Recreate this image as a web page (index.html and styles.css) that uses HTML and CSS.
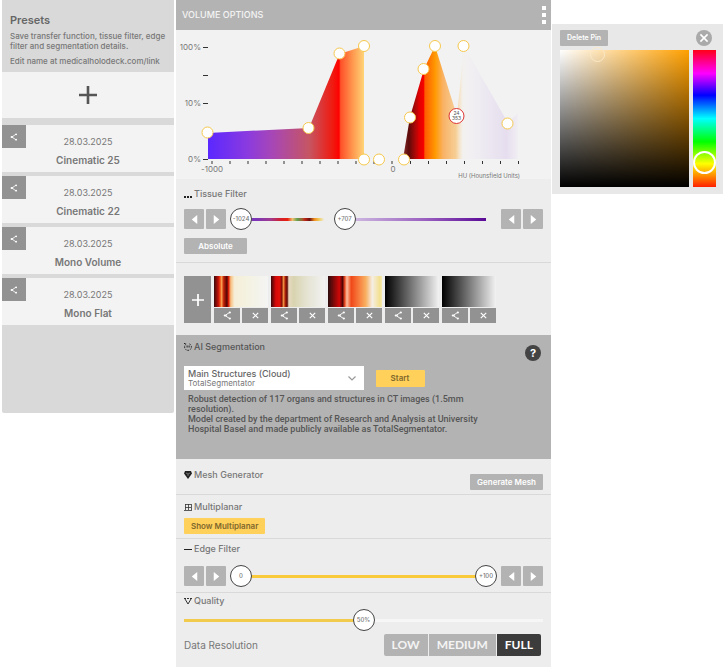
FILE: index.html
```html
<!DOCTYPE html>
<html lang="en">
<head>
<meta charset="utf-8">
<meta name="viewport" content="width=device-width, initial-scale=1">
<title>Volume Options</title>
<link rel="stylesheet" href="styles.css">
</head>
<body>
<svg class="defs" aria-hidden="true">
  <symbol id="share" viewBox="0 0 10 10"><path d="M7.500 1.500 2.200 5l5.300 3.500M2.200 5h2" fill="none" stroke="currentColor" stroke-width="1"/><circle cx="7.600" cy="1.700" r="1.200"/><circle cx="2" cy="5" r="1.200"/><circle cx="7.600" cy="8.300" r="1.200"/></symbol>
  <symbol id="cross" viewBox="0 0 10 10"><path d="m2 2 6 6M8 2 2 8" stroke="currentColor" stroke-width="1.300"/></symbol>
  <symbol id="prev" viewBox="0 0 10 10"><path d="M7.500 1v8L2.500 5z"/></symbol>
  <symbol id="next" viewBox="0 0 10 10"><path d="M2.500 1v8l5-4z"/></symbol>
  <symbol id="plus" viewBox="0 0 18 18"><path d="M9 0v18M0 9h18" stroke="currentColor" stroke-width="2.600"/></symbol>
</svg>
<div class="workspace">
  <aside class="presets">
    <header class="presets-head">
      <h2>Presets</h2>
      <p>Save transfer function, tissue filter, edge<br>filter and segmentation details.</p>
      <p>Edit name at medicalholodeck.com/link</p>
    </header>
    <button class="add-preset" aria-label="Add preset"><svg><use href="#plus"/></svg></button>
    <ul class="preset-list">
      <li class="preset"><button class="share" aria-label="Share"><svg><use href="#share"/></svg></button><time>28.03.2025</time><strong>Cinematic 25</strong></li>
      <li class="preset"><button class="share" aria-label="Share"><svg><use href="#share"/></svg></button><time>28.03.2025</time><strong>Cinematic 22</strong></li>
      <li class="preset"><button class="share" aria-label="Share"><svg><use href="#share"/></svg></button><time>28.03.2025</time><strong>Mono Volume</strong></li>
      <li class="preset"><button class="share" aria-label="Share"><svg><use href="#share"/></svg></button><time>28.03.2025</time><strong>Mono Flat</strong></li>
    </ul>
  </aside>

  <main class="options">
    <header class="bar">
      <h1>VOLUME OPTIONS</h1>
      <button class="menu" aria-label="Menu"><i></i><i></i><i></i></button>
    </header>

    <svg class="chart" viewBox="0 0 375 149" role="img" aria-label="Transfer function">
      <defs>
        <linearGradient id="low" gradientUnits="userSpaceOnUse" x1="32" y1="0" x2="188" y2="0">
          <stop offset="0" stop-color="#5a28ff"/><stop offset=".25" stop-color="#8a3ae0"/><stop offset=".42" stop-color="#a847b4"/><stop offset=".65" stop-color="#c65562"/><stop offset=".8" stop-color="#f01a10"/><stop offset=".84" stop-color="#ff0000"/><stop offset=".85" stop-color="#ff5028"/><stop offset=".93" stop-color="#ff9a50"/><stop offset="1" stop-color="#ffd478"/>
        </linearGradient>
        <linearGradient id="high" gradientUnits="userSpaceOnUse" x1="227" y1="0" x2="342" y2="0">
          <stop offset="0" stop-color="#8a3030"/><stop offset=".05" stop-color="#5c0a0a"/><stop offset=".11" stop-color="#b00808"/><stop offset=".14" stop-color="#e00000"/><stop offset=".18" stop-color="#f80000"/><stop offset=".19" stop-color="#ff5a00"/><stop offset=".28" stop-color="#ff9a00"/><stop offset=".35" stop-color="#f9b266"/><stop offset=".46" stop-color="#f6cf96"/><stop offset=".49" stop-color="#f5e4c8"/><stop offset=".52" stop-color="#f3f1ef"/><stop offset=".62" stop-color="#f0eef2"/><stop offset=".9" stop-color="#e6deef"/><stop offset="1" stop-color="#f1eef3"/>
        </linearGradient>
      </defs>
      <path fill="url(#low)" d="M32 129v-26l101-5 30.500-74 24.500-8v113z"/>
      <path fill="url(#high)" d="m227 129 7-42 14-48 11-23 22 70 7-70 44 77 10-10v46z"/>
      <path class="ticks" d="M27 17.500h5M27 45.500h5M27 73.500h5M27 129.500h5"/>
      <path class="ticks" d="M36 131v3m18-3v3m18-3v3m18-3v3m18-3v3m18-3v3m18-3v3m18-3v3m18-3v3m18-3v3m18-3v3m18.500-3v3m18-3v3m18-3v3m18-3v3m18-3v3m18-3v3m18-3v3"/>
      <g class="axis">
        <g text-anchor="end"><text x="25" y="20">100%</text><text x="25" y="76">10%</text><text x="25" y="132">0%</text></g>
        <g text-anchor="middle"><text x="36" y="142">-1000</text><text x="217" y="142">0</text></g>
        <text class="unit" x="344" y="148" text-anchor="end">HU (Hounsfield Units)</text>
      </g>
      <g class="pins">
        <circle cx="31.500" cy="102.500" r="5.500"/><circle cx="132.500" cy="98" r="5.500"/><circle cx="163.500" cy="23.500" r="5.500"/><circle cx="188" cy="16" r="5.500"/><circle cx="188" cy="129.500" r="5.500"/><circle cx="203" cy="129.500" r="5.500"/><circle cx="228" cy="129.500" r="5.500"/><circle cx="234" cy="87.500" r="5.500"/><circle cx="247.500" cy="39" r="5.500"/><circle cx="259" cy="16" r="5.500"/><circle cx="287.500" cy="16" r="5.500"/><circle cx="331.500" cy="93.500" r="5.500"/>
        <circle class="active" cx="280.500" cy="86" r="7.500"/>
      </g>
      <g class="pin-text" text-anchor="middle"><text x="280.500" y="85">24</text><text x="280.500" y="90">353</text></g>
    </svg>

    <section class="tissue">
      <h2><svg viewBox="0 0 8 8"><path d="M0 6h2v2H0zM3 6h2v2H3zM6 6h2v2H6z"/></svg>Tissue Filter</h2>
      <div class="slider-row">
        <div class="steps"><button aria-label="Lower minimum"><svg><use href="#prev"/></svg></button><button aria-label="Raise minimum"><svg><use href="#next"/></svg></button></div>
        <div class="slider tissue-range">
          <input type="range" min="-1024" max="3069" value="-1024" aria-label="Tissue minimum">
          <input type="range" min="-1024" max="3069" value="707" aria-label="Tissue maximum">
          <output class="at-start">-1024</output><output class="at-tissue">+707</output>
        </div>
        <div class="steps"><button aria-label="Lower maximum"><svg><use href="#prev"/></svg></button><button aria-label="Raise maximum"><svg><use href="#next"/></svg></button></div>
      </div>
      <button class="button absolute-mode">Absolute</button>
    </section>

    <section class="swatches">
      <button class="add-swatch" aria-label="Add color map"><svg><use href="#plus"/></svg></button>
      <div class="swatch"><button class="ramp ramp-a" aria-label="Color map 1"></button><button aria-label="Share"><svg><use href="#share"/></svg></button><button aria-label="Delete"><svg><use href="#cross"/></svg></button></div>
      <div class="swatch"><button class="ramp ramp-b" aria-label="Color map 2"></button><button aria-label="Share"><svg><use href="#share"/></svg></button><button aria-label="Delete"><svg><use href="#cross"/></svg></button></div>
      <div class="swatch"><button class="ramp ramp-c" aria-label="Color map 3"></button><button aria-label="Share"><svg><use href="#share"/></svg></button><button aria-label="Delete"><svg><use href="#cross"/></svg></button></div>
      <div class="swatch"><button class="ramp ramp-d" aria-label="Color map 4"></button><button aria-label="Share"><svg><use href="#share"/></svg></button><button aria-label="Delete"><svg><use href="#cross"/></svg></button></div>
      <div class="swatch"><button class="ramp ramp-d" aria-label="Color map 5"></button><button aria-label="Share"><svg><use href="#share"/></svg></button><button aria-label="Delete"><svg><use href="#cross"/></svg></button></div>
    </section>

    <section class="ai">
      <div class="ai-head">
        <h2><svg viewBox="0 0 8 8"><path d="M5.500.900a3.400 3.400 0 1 1-3 0" fill="none" stroke="#222" stroke-dasharray="1.600 1"/><path d="M2.600 2.500h1v2h-1zM4.600 2.500h1v2h-1zM0 0h1.500v1H0z"/></svg>AI Segmentation</h2>
        <button class="help" aria-label="Help">?</button>
      </div>
      <div class="model-row">
        <div class="model">
          <select aria-label="Model"><option>Main Structures (Cloud)</option></select>
          <span>TotalSegmentator</span>
          <svg viewBox="0 0 8 5"><path d="m.5.500 3.500 3.500L7.500.500" fill="none" stroke="#999" stroke-width="1.200"/></svg>
        </div>
        <button class="button yellow start">Start</button>
      </div>
      <p>Robust detection of 117 organs and structures in CT images (1.5mm<br>resolution).<br>Model created by the department of Research and Analysis at University<br>Hospital Basel and made publicly available as TotalSegmentator.</p>
    </section>

    <section class="mesh">
      <h2><svg viewBox="0 0 8 8"><path d="M1 0h6l1 2.500L4 8 0 2.500z"/><path d="m2 2 2 1 2-1M4 3v2" fill="none" stroke="#aaa" stroke-width=".6"/></svg>Mesh Generator</h2>
      <button class="button">Generate Mesh</button>
    </section>

    <section class="multiplanar">
      <h2><svg viewBox="0 0 8 8"><path d="M1 1.500h6M1 4.500h6M0 7.500h8M1.500 1v6M4.500 1v6M7.500 1v6" fill="none" stroke="#333" stroke-width=".8"/></svg>Multiplanar</h2>
      <button class="button yellow">Show Multiplanar</button>
    </section>

    <section class="edge">
      <h2><svg viewBox="0 0 8 8"><path d="M0 4h8v1H0z"/></svg>Edge Filter</h2>
      <div class="slider-row">
        <div class="steps"><button aria-label="Lower minimum"><svg><use href="#prev"/></svg></button><button aria-label="Raise minimum"><svg><use href="#next"/></svg></button></div>
        <div class="slider edge-range">
          <input type="range" value="0" aria-label="Edge minimum">
          <input type="range" value="100" aria-label="Edge maximum">
          <output class="at-start">0</output><output class="at-end">+100</output>
        </div>
        <div class="steps"><button aria-label="Lower maximum"><svg><use href="#prev"/></svg></button><button aria-label="Raise maximum"><svg><use href="#next"/></svg></button></div>
      </div>
    </section>

    <section class="quality">
      <h2><svg viewBox="0 0 8 8"><path d="M0 1.500h2M3 1.500h2M6 1.500h2M1 2l3 5 3-5" fill="none" stroke="#333"/></svg>Quality</h2>
      <div class="slider quality-range">
        <input type="range" value="50" aria-label="Quality">
        <output class="at-middle">50%</output>
      </div>
      <fieldset class="resolution">
        <legend>Data Resolution</legend>
        <div class="segments">
          <label><input type="radio" name="resolution">LOW</label>
          <label><input type="radio" name="resolution">MEDIUM</label>
          <label><input type="radio" name="resolution" checked>FULL</label>
        </div>
      </fieldset>
    </section>
  </main>

  <aside class="picker">
    <div class="picker-head">
      <button class="button">Delete Pin</button>
      <button class="close" aria-label="Close"><svg><use href="#cross"/></svg></button>
    </div>
    <div class="picker-body">
      <div class="shade"><i></i></div>
      <input class="hue" type="range" value="89" aria-label="Hue">
    </div>
  </aside>
</div>
</body>
</html>
```
FILE: styles.css
```css
* { box-sizing: border-box; }

body {
  margin: 0;
  background: #fff;
  color: #777;
  font: 8px/10px Inter, "Liberation Sans", sans-serif;
}

h1, h2, p, ul, fieldset { margin: 0; padding: 0; border: 0; }

button {
  padding: 0;
  border: 0;
  background: #b3b3b3;
  color: #fff;
  font: inherit;
  display: grid;
  place-items: center;
}

svg { fill: currentColor; display: block; }
.defs { position: absolute; width: 0; height: 0; }

.workspace {
  display: grid;
  grid-template-columns: minmax(0, 176fr) minmax(0, 375fr) minmax(0, 172fr);
  align-items: start;
}

/* Presets */
.presets {
  margin: 0 2px;
  padding-bottom: 88px;
  background: #d9d9d9;
  border-radius: 0 0 2px 2px;
}
.presets-head { height: 72px; padding: 14px 0 0 8px; white-space: nowrap; }
.presets-head h2 { margin-bottom: 4px; font-size: 11px; line-height: 13px; font-weight: 600; color: #666; }
.presets-head p { margin-bottom: 5px; font-weight: 500; }
.add-preset { width: 100%; height: 46px; background: #f3f3f3; color: #555; }
.add-preset svg { width: 18px; height: 18px; }
.preset-list { list-style: none; margin-top: 7px; display: grid; gap: 4px; }
.preset {
  position: relative;
  height: 47px;
  padding-top: 11px;
  background: #f3f3f3;
  text-align: center;
}
.preset time { display: block; font-size: 9px; line-height: 12px; }
.preset strong { display: block; margin-top: 5px; font-size: 10px; line-height: 14px; font-weight: 600; }
.share { position: absolute; left: 0; top: 0; width: 24px; height: 23px; background: #929292; }
.share svg { width: 8px; height: 8px; }

/* Main panel */
.options { background: #ededed; }
.bar {
  height: 30px;
  padding: 0 5px 0 6px;
  background: #b3b3b3;
  color: #f4f4f4;
  display: flex;
  align-items: center;
  justify-content: space-between;
}
.bar h1 { font-size: 9px; line-height: 12px; font-weight: 500; }
.menu { gap: 3px; }
.menu i { width: 4px; height: 4px; background: #fff; }

.chart { width: 100%; height: auto; background: #f2f2f2; }
.ticks { fill: none; stroke: #333; }
.axis { fill: #777; font-size: 8px; }
.axis .unit { font-size: 6px; }
.pins circle { fill: #fff; stroke: #f5c84c; }
.pins .active { stroke: #d33; }
.pin-text { fill: #555; font-size: 5px; }

section { padding: 0 8px; border-bottom: 1px solid #d9d9d9; }
section h2 {
  display: flex;
  align-items: center;
  gap: 2px;
  font-size: 9px;
  line-height: 12px;
  font-weight: 500;
}
section h2 svg { width: 8px; height: 8px; color: #222; }

.button { height: 16px; padding: 0 7px; border-radius: 1px; font-weight: 600; white-space: nowrap; }
.yellow { background: #ffd05a; color: #80682d; }

.slider-row { display: flex; align-items: center; gap: 4px; }
.steps { display: flex; gap: 2px; }
.steps button { width: 20px; height: 20px; border-radius: 1px; }
.steps svg { width: 11px; height: 11px; }

.slider { position: relative; flex: 1; height: 22px; display: flex; align-items: center; }
.slider::before { content: ""; flex: 1; height: 3px; margin: 0 11px; }
.slider input {
  position: absolute;
  inset: 0;
  width: 100%;
  height: 22px;
  margin: 0;
  appearance: none;
  background: none;
  pointer-events: none;
}
.slider input::-webkit-slider-thumb {
  appearance: none;
  width: 22px;
  height: 22px;
  border: 1px solid #444;
  border-radius: 50%;
  background: #fff;
  pointer-events: auto;
}
.slider output {
  position: absolute;
  width: 22px;
  text-align: center;
  font-size: 6px;
  font-weight: 500;
  pointer-events: none;
}
.at-start { left: 0; }
.at-end { right: 0; }
.at-middle { left: calc(50% - 11px); }
.at-tissue { left: calc((100% - 22px) * .423); }

.tissue { padding-top: 9px; padding-bottom: 8px; display: grid; gap: 8px; }
.tissue-range::before {
  background: linear-gradient(90deg, #7a35b8 6%, #a03a90 12%, #d02030 16%, #e82010 19%, #f0c070 21%, #60a050 23%, #a06030 25%, #c02818 26%, #701010 28%, #f09020 30%, #f0d060 32%, #ededed 34%, #ededed 38%, #cdb8e0 46%, #9a60c0 75%, #5a0a96);
}
.absolute-mode { width: 63px; justify-self: start; }

.swatches { padding-top: 13px; padding-bottom: 12px; display: flex; gap: 3px; border: 0; }
.add-swatch { width: 27px; height: 47px; background: #929292; }
.add-swatch svg { width: 12px; height: 12px; }
.swatch { width: 54px; display: grid; grid-template: 31px 15px / 1fr 1fr; gap: 1px 2px; }
.swatch button { background: #929292; }
.swatch svg { width: 9px; height: 9px; }
.swatch .ramp { grid-column: 1 / -1; }
.swatch .ramp-a { background: linear-gradient(90deg, #3a0808, #c01008 8%, #f04010 11%, #f8a050 14%, #c02008 18%, #500404 24%, #e02008 27%, #f8c080 31%, #f5eed8 38%, #f4f2e0 60%, #f4f4f4); }
.swatch .ramp-b { background: linear-gradient(90deg, #3a0808, #d80808 9%, #e01008 16%, #801008 20%, #f09040 23%, #a01808 27%, #600c08 30%, #e8d8c0 33%, #d8d4b0 42%, #e4e2d0 65%, #f2f2f2); }
.swatch .ramp-c { background: linear-gradient(90deg, #2a0c0c, #a00808 15%, #d00808 21%, #500404 27%, #e84820 31%, #fbc0a0 35%, #f04818 43%, #f88040 58%, #f8b060 70%, #f5eee4 82%, #f2e090 96%, #f2e8b0); }
.swatch .ramp-d { background: linear-gradient(90deg, #000, #f2f2f2); }

.ai { padding-top: 6px; padding-bottom: 25px; background: #b3b3b3; color: #555; border: 0; }
.ai-head { position: relative; }
.help {
  position: absolute;
  right: 2px;
  top: 4px;
  width: 16px;
  height: 16px;
  border-radius: 50%;
  background: #444;
  font-size: 11px;
  font-weight: 700;
}
.model-row { margin: 13px 0 4px; display: flex; align-items: center; gap: 12px; }
.model { position: relative; width: 50%; height: 24px; }
.model select {
  width: 100%;
  height: 24px;
  padding: 0 4px 9px;
  appearance: none;
  border: 0;
  border-radius: 0;
  background: #fff;
  color: #666;
  font: 500 9px/12px Inter, "Liberation Sans", sans-serif;
}
.model span { position: absolute; left: 4px; bottom: 2px; color: #777; pointer-events: none; }
.model svg { position: absolute; right: 8px; top: 10px; width: 8px; height: 5px; pointer-events: none; }
.start { width: 49px; height: 17px; }
.ai p { padding-left: 4px; font: 500 9px/10px Roboto, sans-serif; white-space: nowrap; }

.mesh { height: 36px; padding-top: 10px; display: flex; align-items: flex-start; justify-content: space-between; }
.mesh .button { margin-top: 5px; }
.multiplanar { padding-top: 6px; padding-bottom: 4px; }
.multiplanar .button { margin-top: 5px; }
.edge { padding-top: 4px; padding-bottom: 5px; }
.edge .slider-row { margin-top: 10px; }
.edge-range::before { background: #f8ca3c; }

.quality { padding-top: 2px; padding-bottom: 11px; border: 0; }
.quality-range { margin-top: 2px; }
.quality-range::before { margin: 0; background: linear-gradient(90deg, #f2ca4c 50%, #f6f6f6 50%); }
.resolution { margin-top: 3px; display: flex; align-items: center; justify-content: space-between; padding-right: 2px; }
.resolution legend { float: left; padding: 0; font-size: 10px; line-height: 22px; }
.segments { display: flex; gap: 1px; margin-left: auto; border-radius: 2px; overflow: hidden; }
.segments label {
  position: relative;
  height: 22px;
  padding: 0 8px;
  background: #b3b3b3;
  color: #f4f4f4;
  font: 700 12px/22px Lato, sans-serif;
}
.segments input { position: absolute; inset: 0; margin: 0; appearance: none; }
.segments label:has(:checked) { background: #3c3c3c; color: #fff; }

/* Color picker */
.picker { margin: 24px 0 0 1px; padding: 6px 7px 7px 8px; background: #e8e8e8; }
.picker-head { display: flex; justify-content: space-between; align-items: center; margin-bottom: 4px; padding-right: 4px; }
.picker-head .button { font-size: 7px; }
.close { width: 16px; height: 16px; border-radius: 50%; background: #aaa; }
.close svg { width: 12px; height: 12px; }
.picker-body { display: flex; gap: 4px; height: 137px; }
.shade {
  position: relative;
  flex: 1;
  background: linear-gradient(transparent, #000), linear-gradient(90deg, #fff, #ffa000);
}
.shade i { position: absolute; left: 23%; top: -3px; width: 15px; height: 15px; border: 1px solid #fbe9c8; border-radius: 50%; }
.hue {
  writing-mode: vertical-lr;
  appearance: none;
  width: 23px;
  height: 137px;
  margin: 0;
  background: linear-gradient(#ff0018, #f0f 17%, #00f 33%, #0ff 50%, #0f0 67%, #ff0 83%, #ff2000);
}
.hue::-webkit-slider-thumb {
  appearance: none;
  width: 23px;
  height: 23px;
  border: 2px solid #fff;
  border-radius: 50%;
  background: none;
}
```
